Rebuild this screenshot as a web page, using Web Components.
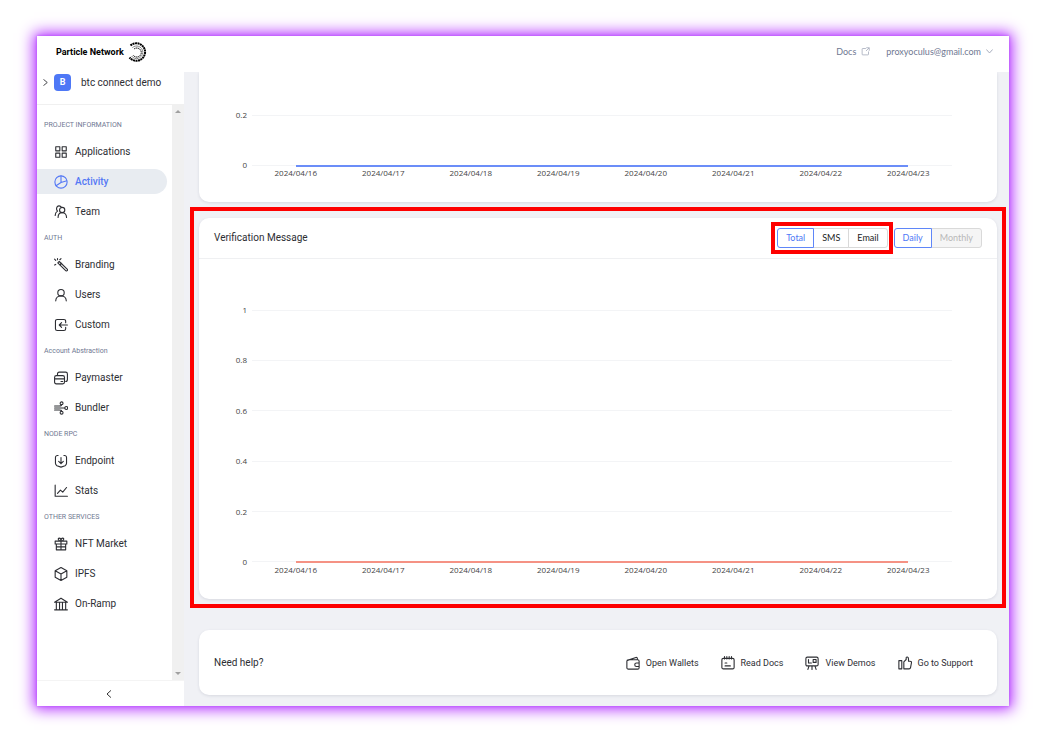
<!DOCTYPE html>
<html lang="en">
<head>
<meta charset="utf-8">
<title>Particle Network Dashboard</title>
<style>
  body { margin: 0; background: #fff; font-family: Roboto, "Liberation Sans", sans-serif; font-size: 10px; color: #2d2e33; }
</style>
</head>
<body>
<dash-app></dash-app>

<script>
const ICONS = {
  apps: '<path d="M3 3h7v7H3zM14 3h7v7h-7zM3 14h7v7H3zM14 14h7v7h-7z"/>',
  pie: '<circle cx="12" cy="12" r="10.5"/><path d="M12 1.500V13L3.500 18.500M12 13l10-3"/>',
  team: '<path d="M5 3.500A5 5 0 0 1 12 3M2 18c0-4 1.500-6 4-7.500A6 6 0 0 1 5 4"/><circle cx="14" cy="8.500" r="4.500"/><path d="M7 21.500c0-5 3-8.500 7-8.500s7.500 3.500 7.500 8.500"/>',
  wand: '<path d="M6.500 8.500 9 6l14 13.500c.8 1.800-.8 3.300-2.500 2.500zM10 12l3-3M6 1v2M1 2l2 2M12 1l-2 2M1 12l2-1"/>',
  user: '<circle cx="12" cy="8" r="5.500"/><path d="M3 22c0-5 4-8.500 9-8.500s9 3.500 9 8.500"/>',
  custom: '<path d="M20 8V5.500c0-2-1-3-3-3H5.500c-2 0-3 1-3 3v13c0 2 1 3 3 3H17c2 0 3-1 3-3V16M23 12H9.500M13 8l-4 4 4 4"/>',
  cards: '<path d="M6 7V5c0-2 1-3 3-3h11c2 0 3 1 3 3v9c0 2-1 4-3 4"/><path d="M4 8h11c2 0 3 1 3 3v8c0 2-1 3-3 3H4c-2 0-3-1-3-3v-8c0-2 1-3 3-3zM1 13.500h17M12 18h3"/>',
  bundler: '<circle cx="13" cy="4" r="2.500"/><circle cx="21" cy="12" r="2.500"/><circle cx="13" cy="20" r="2.500"/><path d="M1 12h17.500M1 8.500h8c3 0 4-.500 4-2M1 15.500h8c3 0 4 .500 4 2"/>',
  endpoint: '<path d="M7 2.500H6c-2 0-3.500 1.500-3.500 3.500v10c0 2 1 3 2.500 4l7 2.500 7-2.500c1.500-1 2.500-2 2.500-4V6c0-2-1.500-3.500-3.500-3.500h-1M12 6v10.500M8 12.500l4 4 4-4"/>',
  stats: '<path d="M2 2v19h21M6 16l5-5.500 4 3.500 6.500-8"/>',
  gift: '<path d="M2 7h20v5H2zM4 12h16v10H4zM12 7v15M12 7C7 7 6 2 9 2c2 0 3 2 3 5 0-3 1-5 3-5 3 0 2 5-3 5M4 17h16"/>',
  cube: '<path d="M12 1 22 6.500v11L12 23 2 17.500v-11zM2 6.500 12 12l10-5.500M12 12v11"/>',
  bank: '<path d="M1 9 12 2l11 7zM4 9v12M9.500 9v12M14.500 9v12M20 9v12M1 22h22"/>',
  wallet: '<path d="M1.500 9c0-1.500 1-2.500 2.500-2.500h16c1.500 0 2.500 1 2.500 2.500v11c0 1.500-1 2.500-2.500 2.500H4c-1.500 0-2.500-1-2.500-2.500zM2.500 7.500 17 2.500c1.500-.5 2.500.5 2.500 2v2M22.500 12H18a3 3 0 0 0 0 6h4.500"/>',
  docs: '<path d="M4 4h16c1.500 0 2.500 1 2.500 2.500v13c0 1.500-1 2.500-2.500 2.500H4c-1.500 0-2.500-1-2.500-2.500v-13C1.500 5 2.500 4 4 4zM6 1v4M10 1v4M14 1v4M18 1v4M7 12h3M7 17h9"/>',
  board: '<path d="M4 2h16c1.500 0 2.500 1 2.500 2.500v10c0 1.500-1 2.500-2.500 2.500H4c-1.500 0-2.500-1-2.500-2.500v-10C1.500 3 2.500 2 4 2zM6 6v6M6 12h5M14 6h5v5h-5zM7 17l-2 6M17 17l2 6M12 17v6"/>',
  thumb: '<path d="M1.500 8h5v14h-5zM10 10l4-4V3c0-2 4-2 4 2v4h2.500c2 0 3 1 2.500 3l-1.500 8c-.3 1.500-1 2-2.500 2h-9z"/>',
  external: '<path d="M12 4H5c-1.500 0-2 .5-2 2v13c0 1.500.5 2 2 2h13c1.500 0 2-.5 2-2v-6M15 2h7v7M21 3l-7 7"/>',
  right: '<path d="M6 2l12 10L6 22"/>',
  left: '<path d="M17 2 6 12l11 10"/>',
  down: '<path d="M2 6l10 11L22 6"/>'
};

class UiIcon extends HTMLElement {
  connectedCallback() {
    const size = this.getAttribute('size') || 14;
    this.attachShadow({ mode: 'open' }).innerHTML = `
      <style>
        :host { display: inline-flex; flex: none; }
        svg { fill: none; stroke: currentColor; stroke-width: var(--stroke, 1.9); stroke-linejoin: round; stroke-linecap: round; }
      </style>
      <svg width="${size}" height="${size}" viewBox="0 0 24 24" aria-hidden="true">${ICONS[this.getAttribute('name')]}</svg>`;
  }
}
customElements.define('ui-icon', UiIcon);

class BrandLogo extends HTMLElement {
  connectedCallback() {
    this.attachShadow({ mode: 'open' }).innerHTML = `
      <style>
        :host { display: flex; align-items: center; gap: 3px; font-size: 9px; font-weight: 700; line-height: 12px; color: #000; }
        svg { flex: none; }
      </style>
      <slot></slot>
      <svg width="20" height="20" viewBox="0 0 40 40" fill="none" stroke="#000" aria-hidden="true">
        <path d="M7 7A17.500 17.500 0 1 1 5 31" stroke-width="4" stroke-dasharray="4 1"/>
        <path d="M11 11A12.500 12.500 0 1 1 9 28" stroke-width="1.200" stroke-dasharray="3 1"/>
        <path d="M14 14A9 9 0 1 1 12 26" stroke-width="2" stroke-dasharray="3 1"/>
      </svg>`;
  }
}
customElements.define('brand-logo', BrandLogo);

class TopBar extends HTMLElement {
  connectedCallback() {
    this.attachShadow({ mode: 'open' }).innerHTML = `
      <style>
        :host { display: block; background: #fff; }
        header { display: flex; align-items: center; justify-content: space-between; height: 31px; padding: 0 16px 5px 19px; }
        nav { display: flex; align-items: center; gap: 16px; }
        a, button { display: flex; align-items: center; gap: 5px; padding: 0; border: 0; background: none; color: #6f7892; text-decoration: none; font: 9px/12px Lato, sans-serif; }
        ui-icon { color: #9aa1b3; }
      </style>
      <header>
        <brand-logo>Particle Network</brand-logo>
        <nav>
          <a href="#docs">Docs <ui-icon name="external" size="9"></ui-icon></a>
          <button type="button">proxyoculus@gmail.com <ui-icon name="down" size="7" style="--stroke:3"></ui-icon></button>
        </nav>
      </header>`;
  }
}
customElements.define('top-bar', TopBar);

class NavSection extends HTMLElement {
  connectedCallback() {
    this.attachShadow({ mode: 'open' }).innerHTML = `
      <style>
        :host { display: block; }
        h2 { margin: 0; padding-left: 7px; font-size: 7px; font-weight: 400; line-height: 23px; color: #6f7892; }
      </style>
      <h2>${this.getAttribute('label')}</h2><slot></slot>`;
  }
}
customElements.define('nav-section', NavSection);

class NavItem extends HTMLElement {
  connectedCallback() {
    this.attachShadow({ mode: 'open' }).innerHTML = `
      <style>
        :host { display: block; padding: 2px 5px 3px 0; }
        a { display: flex; align-items: center; gap: 7px; height: 25px; padding-left: 17px; border-radius: 0 13px 13px 0; color: inherit; text-decoration: none; line-height: 14px; }
        :host([active]) a { background: #e8ecf1; color: #5478f5; font-weight: 500; }
      </style>
      <a href="#"><ui-icon name="${this.getAttribute('icon')}"></ui-icon><slot></slot></a>`;
  }
}
customElements.define('nav-item', NavItem);

class SideBar extends HTMLElement {
  connectedCallback() {
    this.attachShadow({ mode: 'open' }).innerHTML = `
      <style>
        :host { display: flex; flex-direction: column; width: 147px; flex: none; background: #fff; }
        .project { display: flex; align-items: center; padding: 0 0 12px 5px; height: 20px; border-bottom: 1px solid #f0f0f0; }
        .avatar { display: grid; place-items: center; width: 17px; height: 17px; margin: 0 10px 0 5px; border-radius: 4px; background: #4e78f6; color: #fff; font-size: 9px; font-weight: 700; }
        .scroll { display: flex; flex: 1; min-height: 0; }
        nav { flex: 1; padding-top: 9px; overflow: hidden; }
        .bar { display: flex; flex-direction: column; justify-content: space-between; align-items: center; width: 12px; padding: 5px 0; box-sizing: border-box; background: #f0f0f0; }
        .bar i { border: 3px solid transparent; border-top-width: 0; border-bottom: 3px solid #a0a0a0; }
        .bar i + i { border-bottom-width: 0; border-top: 3px solid #a0a0a0; }
        .collapse { display: grid; place-items: center; height: 26px; padding: 0 4px 0 0; border: 0; border-top: 1px solid #f4f4f4; background: #fff; color: #333; }
      </style>
      <div class="project">
        <ui-icon name="right" size="7" style="--stroke:3"></ui-icon>
        <span class="avatar">B</span>
        <span>btc connect demo</span>
      </div>
      <div class="scroll">
        <nav>
          <nav-section label="PROJECT INFORMATION">
            <nav-item icon="apps">Applications</nav-item>
            <nav-item icon="pie" active>Activity</nav-item>
            <nav-item icon="team">Team</nav-item>
          </nav-section>
          <nav-section label="AUTH">
            <nav-item icon="wand">Branding</nav-item>
            <nav-item icon="user">Users</nav-item>
            <nav-item icon="custom">Custom</nav-item>
          </nav-section>
          <nav-section label="Account Abstraction">
            <nav-item icon="cards">Paymaster</nav-item>
            <nav-item icon="bundler">Bundler</nav-item>
          </nav-section>
          <nav-section label="NODE RPC">
            <nav-item icon="endpoint">Endpoint</nav-item>
            <nav-item icon="stats">Stats</nav-item>
          </nav-section>
          <nav-section label="OTHER SERVICES">
            <nav-item icon="gift">NFT Market</nav-item>
            <nav-item icon="cube">IPFS</nav-item>
            <nav-item icon="bank">On-Ramp</nav-item>
          </nav-section>
        </nav>
        <div class="bar"><i></i><i></i></div>
      </div>
      <button class="collapse" type="button" aria-label="Collapse menu"><ui-icon name="left" size="8" style="--stroke:3"></ui-icon></button>`;
  }
}
customElements.define('side-bar', SideBar);

/* A flat line chart: "ticks" lists the y labels from top to bottom. */
class LineChart extends HTMLElement {
  connectedCallback() {
    const ticks = this.getAttribute('ticks').split(',');
    const days = [16, 17, 18, 19, 20, 21, 22, 23];
    this.attachShadow({ mode: 'open' }).innerHTML = `
      <style>
        :host { display: block; padding: 0 45px 24px 15px; font: 8px/10px "Open Sans", "Noto Sans", sans-serif; color: #444; }
        .rows { display: flex; flex-direction: column; justify-content: space-between; height: var(--plot-height); }
        .row { display: flex; align-items: center; gap: 5px; height: 10px; }
        .row span { width: 33px; text-align: right; }
        .row div { flex: 1; border-top: 1px solid #f3f4f6; }
        hr { width: 87.5%; height: 2px; margin: -1px auto; border: 0; background: var(--series); }
        ol { display: flex; margin: -2px 0 0 38px; padding: 0; list-style: none; }
        li { flex: 1; text-align: center; }
      </style>
      <div class="rows">
        ${ticks.map((t, i) => `<div class="row"><span>${t}</span><div>${i === ticks.length - 1 ? '<hr>' : ''}</div></div>`).join('')}
      </div>
      <ol>${days.map(d => `<li>2024/04/${d}</li>`).join('')}</ol>`;
  }
}
customElements.define('line-chart', LineChart);

class UiCard extends HTMLElement {
  connectedCallback() {
    this.attachShadow({ mode: 'open' }).innerHTML = `
      <style>
        :host { display: block; background: #fff; border-radius: 10px; box-shadow: 0 1px 3px rgba(40, 50, 80, .12); }
      </style>
      <slot></slot>`;
  }
}
customElements.define('ui-card', UiCard);

/* A red outline drawn over its content, to point the reader to it. */
class CalloutBox extends HTMLElement {
  connectedCallback() {
    this.attachShadow({ mode: 'open' }).innerHTML = `
      <style>
        :host { display: block; position: relative; }
        .mark { position: absolute; inset: var(--reach); border: 4px solid #fe0000; pointer-events: none; z-index: 2; }
      </style>
      <slot></slot><div class="mark"></div>`;
  }
}
customElements.define('callout-box', CalloutBox);

class SegmentGroup extends HTMLElement {
  connectedCallback() {
    const off = this.getAttribute('off');
    this.attachShadow({ mode: 'open' }).innerHTML = `
      <style>
        :host { display: flex; }
        button { height: 20px; margin-left: -1px; padding: 0 8px; border: 1px solid #d9d9d9; background: #fff; color: #222; font: 9px/18px Lato, sans-serif; }
        button:first-of-type { margin: 0; border-radius: 3px 0 0 3px; border-color: #5f86f8; color: #4e78f6; position: relative; z-index: 1; }
        button:last-of-type { border-radius: 0 3px 3px 0; }
        button:disabled { background: #f5f5f5; color: #b8b8b8; }
      </style>
      ${this.getAttribute('options').split(',').map(o => `<button type="button"${o === off ? ' disabled' : ''}>${o}</button>`).join('')}`;
  }
}
customElements.define('segment-group', SegmentGroup);

class HelpLinks extends HTMLElement {
  connectedCallback() {
    this.attachShadow({ mode: 'open' }).innerHTML = `
      <style>
        :host { display: flex; align-items: center; justify-content: space-between; height: 65px; padding: 0 24px 0 15px; }
        nav { display: flex; gap: 22px; }
        a { display: flex; align-items: center; gap: 6px; font-size: 9px; line-height: 14px; color: inherit; text-decoration: none; }
      </style>
      <span>Need help?</span>
      <nav>
        <a href="#wallets"><ui-icon name="wallet"></ui-icon>Open Wallets</a>
        <a href="#docs"><ui-icon name="docs"></ui-icon>Read Docs</a>
        <a href="#demos"><ui-icon name="board"></ui-icon>View Demos</a>
        <a href="#support"><ui-icon name="thumb"></ui-icon>Go to Support</a>
      </nav>`;
  }
}
customElements.define('help-links', HelpLinks);

class DashApp extends HTMLElement {
  connectedCallback() {
    this.attachShadow({ mode: 'open' }).innerHTML = `
      <style>
        :host { display: flex; box-sizing: border-box; height: 100vh; padding: 36px 38px 37px 37px; }
        .window { display: flex; flex-direction: column; flex: 1; min-width: 0; background: #fff; box-shadow: 0 0 3px #b84cff, 0 0 14px 3px #b026ff; }
        .body { display: flex; flex: 1; min-height: 0; }
        main { flex: 1; min-width: 0; padding: 0 12px 0 15px; overflow: hidden; background: #f0f1f5; }
        .rest { border-radius: 0 0 10px 10px; padding-top: 38px; }
        .gap { margin: 16px 0 31px; --reach: -11px -9px -9px -9px; }
        .head { display: flex; align-items: center; gap: 6px; height: 40px; padding: 0 15px; border-bottom: 1px solid #eff0f2; }
        h1 { flex: 1; margin: 0; font-size: 10px; font-weight: 400; line-height: 14px; }
        .head callout-box { --reach: -6px -5px -6px -6px; }
        .plot { padding-top: 46px; }
      </style>
      <div class="window">
        <top-bar></top-bar>
        <div class="body">
          <side-bar></side-bar>
          <main>
            <ui-card class="rest"><line-chart ticks="0.2,0" style="--series:#6b8df8; --plot-height:60px"></line-chart></ui-card>
            <callout-box class="gap">
              <ui-card>
                <div class="head">
                  <h1>Verification Message</h1>
                  <callout-box><segment-group options="Total,SMS,Email"></segment-group></callout-box>
                  <segment-group options="Daily,Monthly" off="Monthly"></segment-group>
                </div>
                <div class="plot"><line-chart ticks="1,0.8,0.6,0.4,0.2,0" style="--series:#f59284; --plot-height:262px"></line-chart></div>
              </ui-card>
            </callout-box>
            <ui-card><help-links></help-links></ui-card>
          </main>
        </div>
      </div>`;
  }
}
customElements.define('dash-app', DashApp);
</script>
</body>
</html>
